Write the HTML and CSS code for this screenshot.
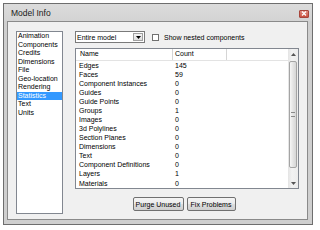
FILE: index.html
```html
<!DOCTYPE html>
<html>
<head>
<meta charset="utf-8">
<link rel="stylesheet" href="styles.css">
</head>
<body>
<div class="window">
  <div class="titlebar">
    <span class="title">Model Info</span>
    <span class="close"><svg width="6" height="5" viewBox="0 0 6 5"><path d="M1 0.5 L5 4.5 M5 0.5 L1 4.5" stroke="#fff" stroke-width="1.3" fill="none"/></svg></span>
  </div>
  <div class="client">
    <ul class="nav">
      <li>Animation</li>
      <li>Components</li>
      <li>Credits</li>
      <li>Dimensions</li>
      <li>File</li>
      <li>Geo-location</li>
      <li>Rendering</li>
      <li class="sel">Statistics</li>
      <li>Text</li>
      <li>Units</li>
    </ul>
    <div class="main">
      <div class="controls">
        <div class="combo">
          <span class="combo-text">Entire model</span>
          <span class="combo-btn"><svg width="5" height="3" viewBox="0 0 5 3"><path d="M0 0 H5 L2.5 3 Z" fill="#000"/></svg></span>
        </div>
        <label class="check"><span class="box"></span><span>Show nested components</span></label>
      </div>
      <div class="table">
        <div class="grid">
          <div class="head"><span class="c1">Name</span><span class="c2">Count</span><span class="c3"></span></div>
          <div class="row"><span class="c1">Edges</span><span class="c2">145</span></div>
          <div class="row"><span class="c1">Faces</span><span class="c2">59</span></div>
          <div class="row"><span class="c1">Component Instances</span><span class="c2">0</span></div>
          <div class="row"><span class="c1">Guides</span><span class="c2">0</span></div>
          <div class="row"><span class="c1">Guide Points</span><span class="c2">0</span></div>
          <div class="row"><span class="c1">Groups</span><span class="c2">1</span></div>
          <div class="row"><span class="c1">Images</span><span class="c2">0</span></div>
          <div class="row"><span class="c1">3d Polylines</span><span class="c2">0</span></div>
          <div class="row"><span class="c1">Section Planes</span><span class="c2">0</span></div>
          <div class="row"><span class="c1">Dimensions</span><span class="c2">0</span></div>
          <div class="row"><span class="c1">Text</span><span class="c2">0</span></div>
          <div class="row"><span class="c1">Component Definitions</span><span class="c2">0</span></div>
          <div class="row"><span class="c1">Layers</span><span class="c2">1</span></div>
          <div class="row"><span class="c1">Materials</span><span class="c2">0</span></div>
        </div>
        <div class="scrollbar">
          <div class="sb-btn"><svg width="5" height="3" viewBox="0 0 5 3"><path d="M0 3 H5 L2.5 0 Z" fill="#555"/></svg></div>
          <div class="sb-track">
            <div class="thumb"><span class="grip"></span></div>
          </div>
          <div class="sb-btn"><svg width="5" height="3" viewBox="0 0 5 3"><path d="M0 0 H5 L2.5 3 Z" fill="#555"/></svg></div>
        </div>
      </div>
      <div class="buttons">
        <button class="btn purge">Purge Unused</button>
        <button class="btn fix">Fix Problems</button>
      </div>
    </div>
  </div>
</div>
</body>
</html>
```

FILE: styles.css
```css
html, body {
  margin: 0;
  padding: 0;
  background: #ffffff;
}
body {
  font-family: "Liberation Sans", Arial, sans-serif;
  font-size: 7px;
  color: #000;
}
.window {
  margin: 3px 0 0 3px;
  width: 310px;
  height: 222px;
  box-sizing: border-box;
  border: 1px solid #6e6e6e;
  background: #cfcfcf;
  display: flex;
  flex-direction: column;
}
.titlebar {
  height: 17px;
  flex: none;
  display: flex;
  align-items: center;
  justify-content: space-between;
  padding: 0 3px 0 7px;
  background: linear-gradient(#dcdcdc, #d3d3d3);
}
.title {
  font-size: 8.5px;
  color: #1a1a1a;
  margin-top: 1px;
}
.close {
  width: 10px;
  height: 8px;
  margin-top: 2px;
  box-sizing: border-box;
  border: 1px solid #a8453a;
  border-radius: 1px;
  background: linear-gradient(#e08a7d, #c9503e);
  display: flex;
  align-items: center;
  justify-content: center;
}
.close svg { display: block; }
.client {
  flex: 1;
  margin: 0 4px 4px 3px;
  border: 1px solid #8a8a8a;
  background: #f0f0f0;
  display: flex;
  align-items: flex-start;
  padding: 9px 0 0 8px;
}
.nav {
  width: 47px;
  height: 183px;
  box-sizing: border-box;
  border: 1px solid #828790;
  background: #fff;
  margin: 0;
  padding: 0;
  list-style: none;
  flex: none;
}
.nav li {
  height: 8.5px;
  line-height: 8.5px;
  padding-left: 1px;
  white-space: nowrap;
}
.nav li.sel {
  background: #3399ff;
  color: #fff;
}
.main {
  margin-left: 12px;
  width: 224px;
  display: flex;
  flex-direction: column;
  flex: none;
}
.controls {
  display: flex;
  align-items: center;
  height: 12px;
}
.combo {
  width: 70px;
  height: 12px;
  box-sizing: border-box;
  border: 1px solid #7a7a7a;
  background: #fff;
  display: flex;
  align-items: center;
  justify-content: space-between;
}
.combo-text {
  padding-left: 1px;
}
.combo-btn {
  width: 10px;
  height: 8px;
  margin-right: 1px;
  box-sizing: border-box;
  border: 1px solid #a0a0a0;
  background: linear-gradient(#f4f4f4, #dedede);
  display: flex;
  align-items: center;
  justify-content: center;
}
.combo-btn svg, .sb-btn svg { display: block; }
.check {
  display: flex;
  align-items: center;
  margin-left: 7px;
}
.box {
  width: 7px;
  height: 7px;
  box-sizing: border-box;
  border: 1px solid #707070;
  background: #fff;
  margin-right: 5px;
}
.table {
  margin-top: 5px;
  height: 141px;
  box-sizing: border-box;
  border: 1px solid #828790;
  background: #fff;
  display: flex;
}
.grid {
  flex: 1;
  overflow: hidden;
}
.head {
  display: flex;
  height: 10.5px;
  line-height: 10.5px;
  border-bottom: 1px solid #e3e3e3;
}
.head .c1 {
  width: 97px;
  padding-left: 4px;
  box-sizing: border-box;
  border-right: 1px solid #d5d5d5;
}
.head .c2 {
  width: 54px;
  padding-left: 2px;
  box-sizing: border-box;
  border-right: 1px solid #d5d5d5;
}
.head .c3 { flex: 1; }
.row {
  display: flex;
  height: 9.08px;
  line-height: 9.08px;
  white-space: nowrap;
}
.row .c1 {
  width: 98px;
  padding-left: 3px;
  box-sizing: border-box;
}
.row .c2 {
  padding-left: 1px;
}
.scrollbar {
  width: 10px;
  display: flex;
  flex-direction: column;
  background: linear-gradient(90deg, #e4e4e4, #f2f2f2 40%, #ececec);
}
.sb-btn {
  height: 10px;
  display: flex;
  align-items: center;
  justify-content: center;
}
.sb-track {
  flex: 1;
  padding: 2px 1px 0 1px;
}
.thumb {
  height: 107px;
  box-sizing: border-box;
  border: 1px solid #a4a4a4;
  border-radius: 2px;
  background: linear-gradient(90deg, #f6f6f6, #e4e4e4 50%, #d6d6d6);
  display: flex;
  align-items: center;
  justify-content: center;
}
.grip {
  width: 4px;
  height: 3px;
  border-top: 1px solid #8a8a8a;
  border-bottom: 1px solid #8a8a8a;
  position: relative;
}
.buttons {
  display: flex;
  justify-content: center;
  gap: 3px;
  padding-right: 6px;
  margin-top: 8px;
}
.btn {
  height: 14px;
  box-sizing: border-box;
  border: 1px solid #707070;
  border-radius: 2px;
  background: linear-gradient(#f4f4f4 0%, #ebebeb 48%, #dddddd 52%, #cfcfcf 100%);
  font-family: "Liberation Sans", Arial, sans-serif;
  font-size: 7px;
  color: #000;
  padding: 0;
  margin: 0;
}
.purge { width: 51px; }
.fix { width: 49px; }
```
